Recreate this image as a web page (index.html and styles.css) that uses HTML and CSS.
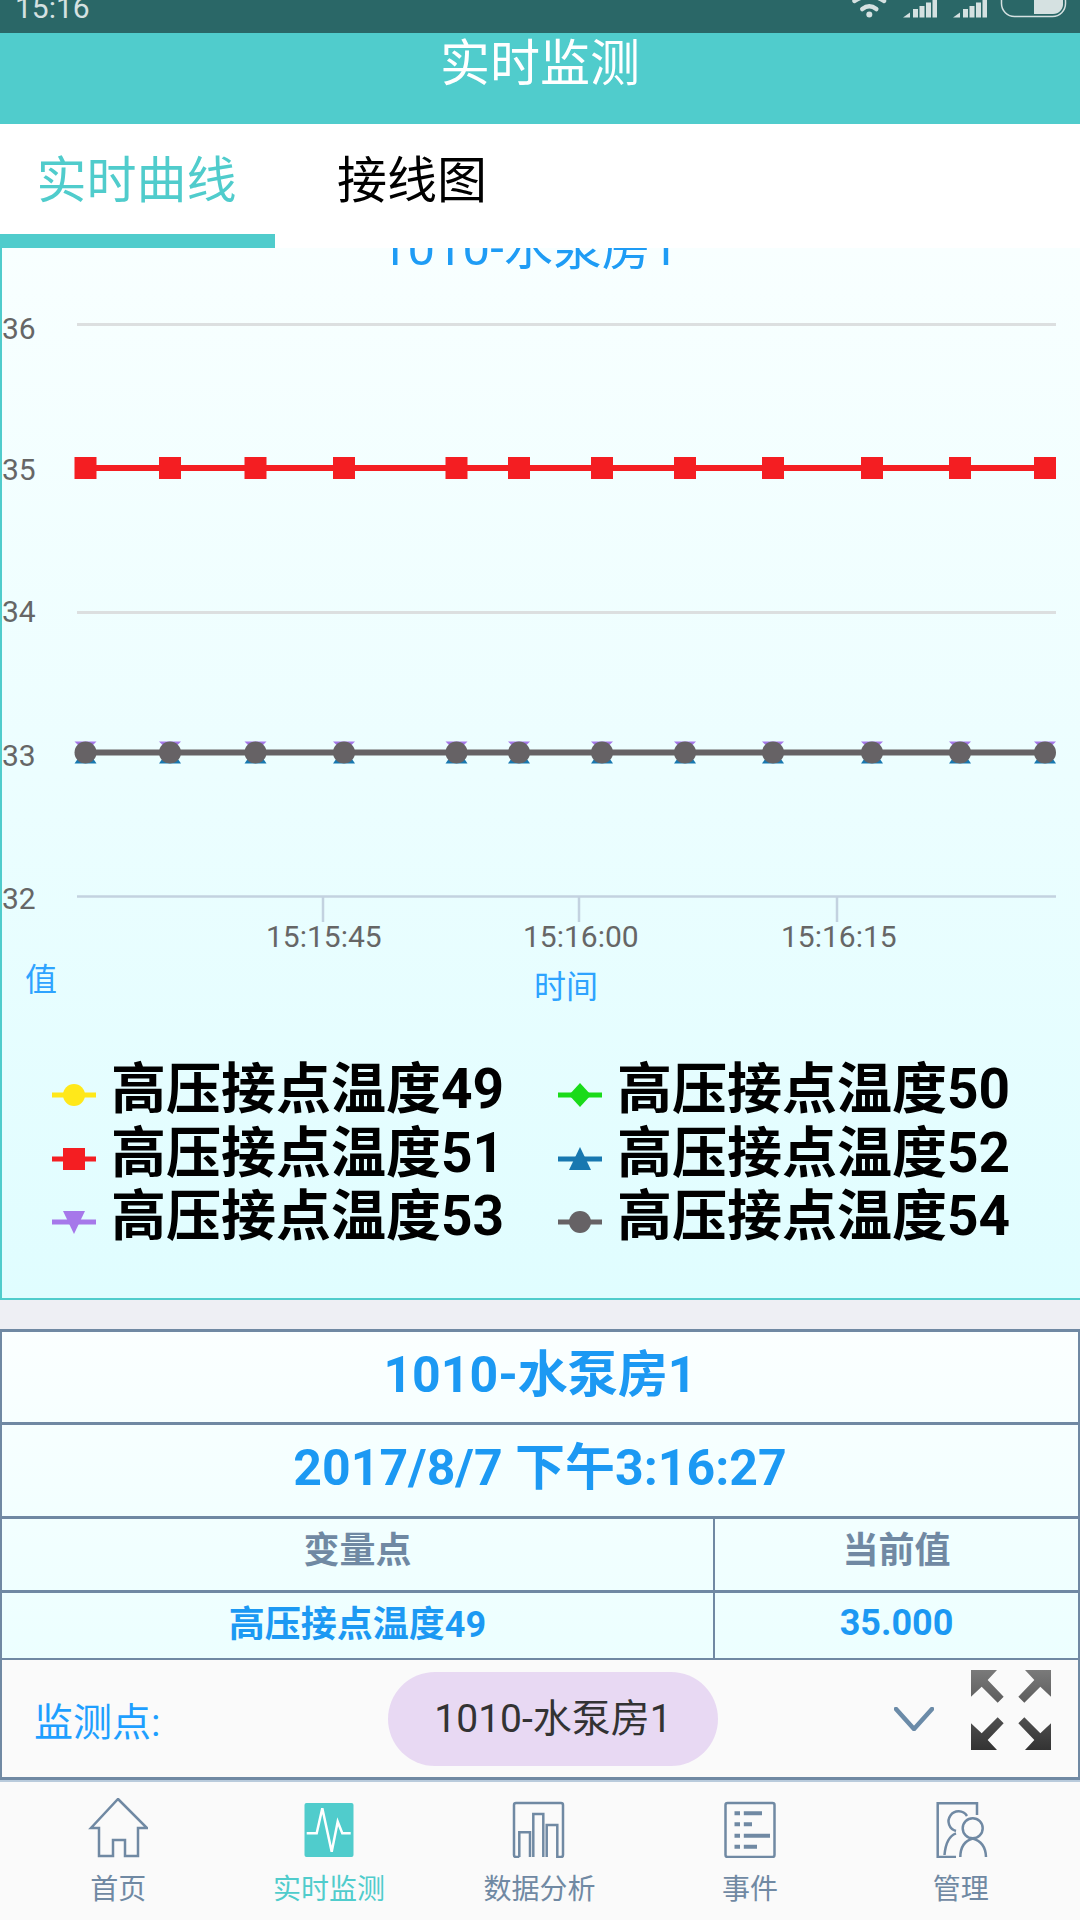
FILE: index.html
```html
<!DOCTYPE html>
<html lang="zh-CN">
<head>
    <meta charset="UTF-8">
    <meta name="viewport" content="width=device-width, initial-scale=1.0">
    <title>实时监测</title>
    <link rel="stylesheet" href="styles.css">
</head>
<body>
    <div class="statusBar">
        <span class="statusTime">15:16</span>
        <svg class="statusIcons" width="240" height="33" viewBox="-20 0 240 33">
            <g fill="none" stroke="#d5e1e1" stroke-width="4.500" stroke-linecap="round">
                <path d="M2.300 9 Q9.300 3.500 16.300 9"/>
                <path d="M-5.500 1 Q9.300 -9 24 1"/>
            </g>
            <circle cx="9.300" cy="14.500" r="3" fill="#d5e1e1"/>
            <g fill="#d5e1e1">
                <path id="signal" d="M43 17.500 L50 12.500 V17.500 Z M53 17.500 V9 H58 V17.500 Z M59.500 17.500 V6 H64.500 V17.500 Z M66 17.500 V2.500 H71 V17.500 Z M72.500 17.500 V0 H77 V17.500 Z"/>
                <use href="#signal" x="50"/>
            </g>
            <rect x="141.500" y="-12" width="64" height="28.500" rx="13" fill="none" stroke="#d5e1e1" stroke-width="1.500"/>
            <path d="M174 0 H203 V3 A10 10 0 0 1 193 14 H174 Z" fill="#d5e1e1"/>
        </svg>
    </div>
    <div class="header">实时监测</div>
    <div class="tabs">
        <div class="tab tabActive">实时曲线</div>
        <div class="tab">接线图</div>
    </div>

    <div class="chartPanel">
        <svg class="chart" width="1078" height="1050" viewBox="0 0 1078 1050">
            <defs>
                <rect id="redPoint" x="-11" y="-11" width="22" height="22" fill="#f41e22"/>
                <g id="greyPoint">
                    <path d="M-11 -11 H11 L0 0 Z" fill="#a678ea"/>
                    <path d="M-11 11 H11 L0 -5 Z" fill="#1878b0"/>
                    <circle r="11" fill="#666265"/>
                </g>
            </defs>

            <text class="chartTitle" x="378" y="17">1010-水泵房1</text>

            <g class="gridLines">
                <path d="M75 76.500 H1054"/>
                <path d="M75 364.500 H1054"/>
            </g>
            <path class="axisLine" d="M75 648.500 H1054 M321 648.500 V674 M577 648.500 V674 M835 648.500 V674"/>

            <g class="axisText">
                <text x="0" y="91">36</text>
                <text x="0" y="232">35</text>
                <text x="0" y="374">34</text>
                <text x="0" y="518">33</text>
                <text x="0" y="661">32</text>
                <text x="264" y="699">15:15:45</text>
                <text x="521" y="699">15:16:00</text>
                <text x="779" y="699">15:16:15</text>
            </g>
            <text class="axisName" x="23" y="743">值</text>
            <text class="axisName" x="532" y="750">时间</text>

            <path class="seriesRed" d="M83 220 H1045"/>
            <use href="#redPoint" x="83.500" y="220"/>
            <use href="#redPoint" x="168" y="220"/>
            <use href="#redPoint" x="253.500" y="220"/>
            <use href="#redPoint" x="342" y="220"/>
            <use href="#redPoint" x="454.500" y="220"/>
            <use href="#redPoint" x="517" y="220"/>
            <use href="#redPoint" x="600" y="220"/>
            <use href="#redPoint" x="683" y="220"/>
            <use href="#redPoint" x="771" y="220"/>
            <use href="#redPoint" x="870" y="220"/>
            <use href="#redPoint" x="958" y="220"/>
            <use href="#redPoint" x="1043" y="220"/>

            <path class="seriesGrey" d="M83 504.500 H1045"/>
            <use href="#greyPoint" x="83.500" y="504.500"/>
            <use href="#greyPoint" x="168" y="504.500"/>
            <use href="#greyPoint" x="253.500" y="504.500"/>
            <use href="#greyPoint" x="342" y="504.500"/>
            <use href="#greyPoint" x="454.500" y="504.500"/>
            <use href="#greyPoint" x="517" y="504.500"/>
            <use href="#greyPoint" x="600" y="504.500"/>
            <use href="#greyPoint" x="683" y="504.500"/>
            <use href="#greyPoint" x="771" y="504.500"/>
            <use href="#greyPoint" x="870" y="504.500"/>
            <use href="#greyPoint" x="958" y="504.500"/>
            <use href="#greyPoint" x="1043" y="504.500"/>

            <!-- legend -->
            <g class="legendText">
                <text x="109" y="860">高压接点温度49</text>
                <text x="615" y="860">高压接点温度50</text>
                <text x="109" y="924">高压接点温度51</text>
                <text x="615" y="924">高压接点温度52</text>
                <text x="109" y="987">高压接点温度53</text>
                <text x="615" y="987">高压接点温度54</text>
            </g>
            <g fill="#ffe81a">
                <rect x="50" y="844.500" width="44" height="5"/>
                <circle cx="72" cy="847" r="11"/>
            </g>
            <g fill="#1adb1a">
                <rect x="556" y="844.500" width="44" height="5"/>
                <path d="M578 835 L589 847 L578 859 L567 847 Z"/>
            </g>
            <g fill="#f41e22">
                <rect x="50" y="908.500" width="44" height="5"/>
                <rect x="61" y="900" width="22" height="22"/>
            </g>
            <g fill="#1878b0">
                <rect x="556" y="908.500" width="44" height="5"/>
                <path d="M578 899 L589 922 H567 Z"/>
            </g>
            <g fill="#a678ea">
                <rect x="50" y="971.500" width="44" height="5"/>
                <path d="M61 963 H83 L72 986 Z"/>
            </g>
            <g fill="#666265">
                <rect x="556" y="971.500" width="44" height="5"/>
                <circle cx="578" cy="974" r="11"/>
            </g>
        </svg>
    </div>

    <table class="dataTable">
        <colgroup>
            <col class="nameCol">
            <col>
        </colgroup>
        <tr class="titleRow"><td colspan="2">1010-水泵房1</td></tr>
        <tr class="titleRow dateRow"><td colspan="2">2017/8/7 下午3:16:27</td></tr>
        <tr class="headRow"><th class="divider">变量点</th><th>当前值</th></tr>
        <tr class="valueRow"><td class="divider">高压接点温度49</td><td class="currentValue">35.000</td></tr>
    </table>

    <div class="picker">
        <span class="pickerLabel">监测点:</span>
        <div class="pickerValue">1010-水泵房1</div>
        <svg class="chevron" width="40" height="24" viewBox="0 0 40 24">
            <path d="M2 2 L20 22 L38 2" fill="none" stroke="#6b8ba8" stroke-width="4.500" stroke-linecap="round" stroke-linejoin="round"/>
        </svg>
        <svg class="expand" width="80" height="80" viewBox="0 0 240 240">
            <defs>
                <linearGradient id="expandFill" gradientUnits="userSpaceOnUse" x1="0" y1="0" x2="0" y2="240">
                    <stop offset="0" stop-color="#7a7a7a"/>
                    <stop offset="1" stop-color="#333"/>
                </linearGradient>
            </defs>
            <g fill="url(#expandFill)">
                <path d="M0 0 H78 L50 30 L98 80 L80 98 L32 50 L0 80 Z"/>
                <path d="M240 0 H162 L190 30 L142 80 L160 98 L208 50 L240 80 Z"/>
                <path d="M0 240 H78 L50 210 L98 160 L80 142 L32 190 L0 160 Z"/>
                <path d="M240 240 H162 L190 210 L142 160 L160 142 L208 190 L240 160 Z"/>
            </g>
        </svg>
    </div>

    <div class="tabBar">
        <div class="navItem">
            <svg class="navIcon" width="60" height="60" viewBox="0 0 60 60">
                <path d="M30 1 L59 30 H50 V58 H37 V42 H25 V58 H11 V30 H3 Z"/>
            </svg>
            <span>首页</span>
        </div>
        <div class="navItem navActive">
            <svg class="navIcon" width="60" height="60" viewBox="0 0 60 60">
                <rect x="5.500" y="5" width="49" height="54" rx="2"/>
                <path d="M7.700 35.300 H17.700 L23.300 10.300 L32.700 53.700 L38.700 23.700 L43.300 35.300 H51.700"/>
            </svg>
            <span>实时监测</span>
        </div>
        <div class="navItem">
            <svg class="navIcon" width="60" height="60" viewBox="0 0 60 60">
                <path d="M10.300 59 H7 Q5 59 5 57 V7 Q5 5 7 5 H52 Q54 5 54 7 V57 Q54 59 52 59 H48.300 V27 H37.700 V59"/>
                <path d="M10.300 59 V34.300 H21 V59"/>
                <path d="M24.300 59 V16 H34.300 V59"/>
            </svg>
            <span>数据分析</span>
        </div>
        <div class="navItem">
            <svg class="navIcon" width="60" height="60" viewBox="0 0 60 60">
                <rect x="5.500" y="5" width="49" height="54" rx="2"/>
                <path class="navBold" d="M14.500 15.300 H20 M14.500 26.300 H20 M14.500 37.700 H20 M14.500 48.700 H20 M23.800 15.300 H42 M23.800 26.300 H32 M23.800 37.700 H50 M23.800 48.700 H37"/>
            </svg>
            <span>事件</span>
        </div>
        <div class="navItem">
            <svg class="navIcon" width="60" height="60" viewBox="0 0 60 60">
                <path d="M46 17 V5.300 H6.700 V59 H25"/>
                <path d="M36 18 A10 10 0 1 0 25 33"/>
                <path d="M25 35.300 Q15 39 13.500 57"/>
                <circle cx="41.700" cy="30.300" r="10"/>
                <path d="M29.300 59 Q29.500 44 41.700 40.500 Q54.500 44 55 59"/>
            </svg>
            <span>管理</span>
        </div>
    </div>
</body>
</html>
```

FILE: styles.css
```css
body {
    font-family: Roboto, "Noto Sans CJK SC", sans-serif;
    margin: 0;
    width: 1080px;
    height: 1920px;
    overflow: hidden;
    background-color: #eeeff4;
}

.statusBar {
    height: 33px;
    background-color: #2a6767;
    overflow: hidden;
    display: flex;
    justify-content: space-between;
}

.statusTime {
    margin: -12px 0 0 15px;
    font-size: 30px;
    line-height: 40px;
    color: #d5e1e1;
}

.header {
    height: 91px;
    background-color: #50cccc;
    color: #ffffff;
    font-size: 50px;
    line-height: 62px;
    text-align: center;
}

.tabs {
    height: 124px;
    background-color: #ffffff;
    display: flex;
}

.tab {
    font-size: 50px;
    line-height: 114px;
    padding-left: 62px;
    color: #000000;
}

.tabActive {
    box-sizing: border-box;
    width: 275px;
    height: 124px;
    padding: 0 2px 0 0;
    text-align: center;
    color: #50cccc;
    border-bottom: 14px solid #50cccc;
}

.chartPanel {
    height: 1050px;
    border-left: 2px solid #50cccc;
    border-bottom: 2px solid #50cccc;
    background: linear-gradient(#f8ffff, #e0fdff);
    overflow: hidden;
}

.chart {
    display: block;
}

.chartTitle {
    font-size: 49px;
    fill: #1e9cf5;
}

.gridLines {
    fill: none;
    stroke: #dcdfe0;
    stroke-width: 3;
}

.axisLine {
    fill: none;
    stroke: #c3d2e0;
    stroke-width: 2.5;
}

.axisText {
    font-size: 30px;
    fill: #666666;
}

.axisName {
    font-size: 32px;
    fill: #2ea3ff;
}

.seriesRed,
.seriesGrey {
    fill: none;
    stroke-width: 6;
}

.seriesRed {
    stroke: #f41e22;
}

.seriesGrey {
    stroke: #666265;
}

.legendText {
    font-size: 55px;
    font-weight: bold;
    fill: #000000;
}

.dataTable {
    width: 1080px;
    margin-top: 29px;
    border-collapse: separate;
    border-spacing: 0;
    table-layout: fixed;
    border-left: 2px solid #7089a3;
    border-right: 2px solid #7089a3;
    background: linear-gradient(#fbffff, #ecffff);
}

.nameCol {
    width: 713px;
}

.dataTable td,
.dataTable th {
    box-sizing: border-box;
    padding: 0;
    border-top: 3px solid #7089a3;
    text-align: center;
    font-weight: bold;
    color: #1c99f3;
}

.dataTable .divider {
    border-right: 2px solid #7089a3;
}

.titleRow td {
    height: 93px;
    padding-bottom: 15px;
    font-size: 50px;
}

.dateRow td {
    height: 94px;
    padding-bottom: 16px;
}

.headRow th {
    height: 74px;
    padding-bottom: 16px;
    font-size: 36px;
    color: #7089a3;
}

.valueRow td {
    height: 68px;
    padding-bottom: 10px;
    font-size: 36px;
}

.valueRow .currentValue {
    padding-bottom: 5px;
}

.picker {
    box-sizing: border-box;
    height: 122px;
    display: flex;
    align-items: center;
    padding-left: 32px;
    background-color: #fafafa;
    border: 2px solid #7089a3;
    border-bottom-width: 3px;
}

.pickerLabel {
    width: 354px;
    font-size: 39px;
    color: #1e9fff;
}

.pickerValue {
    width: 330px;
    height: 94px;
    line-height: 94px;
    border-radius: 47px;
    background-color: #e8d9f3;
    color: #333333;
    font-size: 39px;
    text-align: center;
}

.chevron {
    margin-left: 176px;
}

.expand {
    margin: -18px 0 0 37px;
}

.tabBar {
    height: 140px;
    box-sizing: border-box;
    padding: 16px 14px 0 13px;
    display: grid;
    grid-template-columns: repeat(5, 1fr);
    background-color: #fafafa;
    border-top: 2px solid #b9cbdc;
}

.navItem {
    display: flex;
    flex-direction: column;
    align-items: center;
    font-size: 28px;
    line-height: 36px;
    color: #7089a3;
}

.navItem span {
    margin-top: 14px;
}

.navIcon {
    fill: none;
    stroke: #7089a3;
    stroke-width: 2.5;
}

.navBold {
    stroke-width: 4;
}

.navActive {
    color: #50cccc;
}

.navActive rect {
    fill: #50cccc;
    stroke: none;
}

.navActive path {
    stroke: #ffffff;
}
```
